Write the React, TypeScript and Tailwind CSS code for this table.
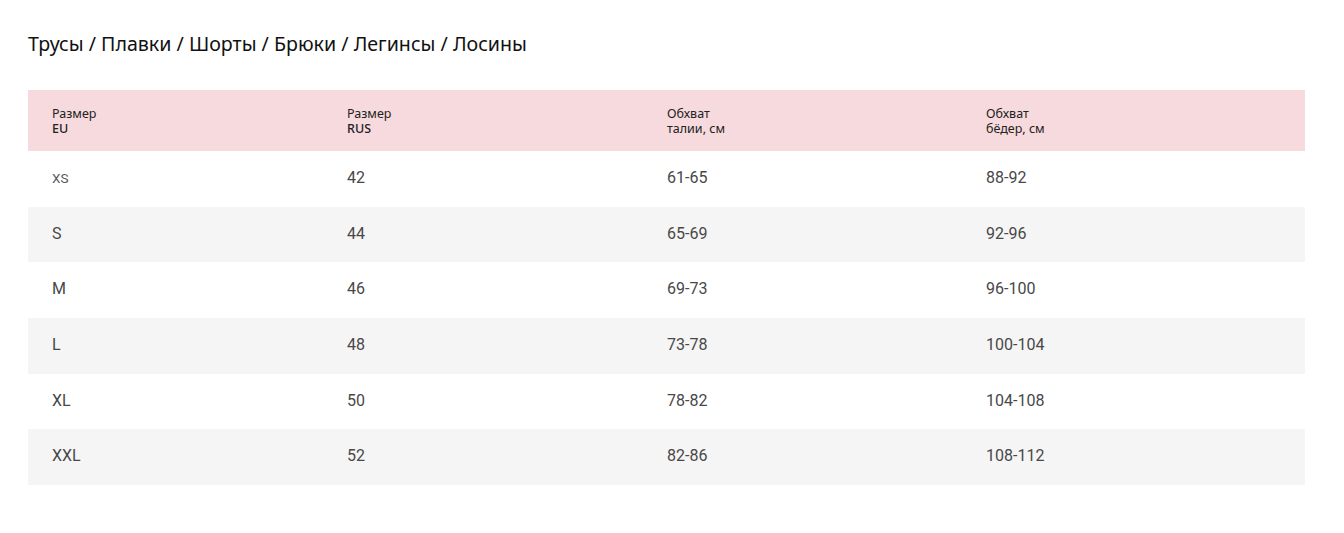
import React from "react";

type Row = { eu: string; rus: string; waist: string; hips: string };

const rows: Row[] = [
  { eu: "XS", rus: "42", waist: "61-65", hips: "88-92" },
  { eu: "S", rus: "44", waist: "65-69", hips: "92-96" },
  { eu: "M", rus: "46", waist: "69-73", hips: "96-100" },
  { eu: "L", rus: "48", waist: "73-78", hips: "100-104" },
  { eu: "XL", rus: "50", waist: "78-82", hips: "104-108" },
  { eu: "XXL", rus: "52", waist: "82-86", hips: "108-112" },
];

const cols = "grid grid-cols-[295px_320px_319px_1fr]";

const App: React.FC = () => {
  return (
    <div
      className="min-h-[533px] bg-white px-[28px] pt-[32px] text-[#222]"
      style={{ fontFamily: '"Noto Sans", "Open Sans", sans-serif' }}
    >
      <h1 className="text-[19.6px] leading-[24px] font-normal text-[#111]">
        Трусы / Плавки / Шорты / Брюки / Легинсы / Лосины
      </h1>

      <div className="mt-[34px] w-[1277px]">
        {/* Header */}
        <div className={`${cols} h-[61px] items-center bg-[#f7dadd] text-[12.5px] leading-[15px] text-[#222]`}>
          <div className="flex flex-col pl-6">
            <span>Размер</span>
            <span className="font-medium">EU</span>
          </div>
          <div className="flex flex-col pl-6">
            <span>Размер</span>
            <span className="font-medium">RUS</span>
          </div>
          <div className="flex flex-col pl-6">
            <span>Обхват</span>
            <span>талии, см</span>
          </div>
          <div className="flex flex-col pl-6">
            <span>Обхват</span>
            <span>бёдер, см</span>
          </div>
        </div>

        {/* Rows */}
        {rows.map((r, i) => (
          <div
            key={r.eu}
            className={`${cols} h-[55.7px] items-center pb-[2px] text-[16px] leading-[18px] text-[#484848] ${
              i % 2 === 1 ? "bg-[#f5f5f5]" : "bg-white"
            }`}
            style={{ fontFamily: 'Roboto, "Noto Sans", sans-serif' }}
          >
            <div className={`pl-6 ${r.eu === "XS" ? "text-[13.5px] text-[#5a5a5a]" : ""}`}>{r.eu}</div>
            <div className="pl-6">{r.rus}</div>
            <div className="pl-6">{r.waist}</div>
            <div className="pl-6">{r.hips}</div>
          </div>
        ))}
      </div>
    </div>
  );
};

export default App;
